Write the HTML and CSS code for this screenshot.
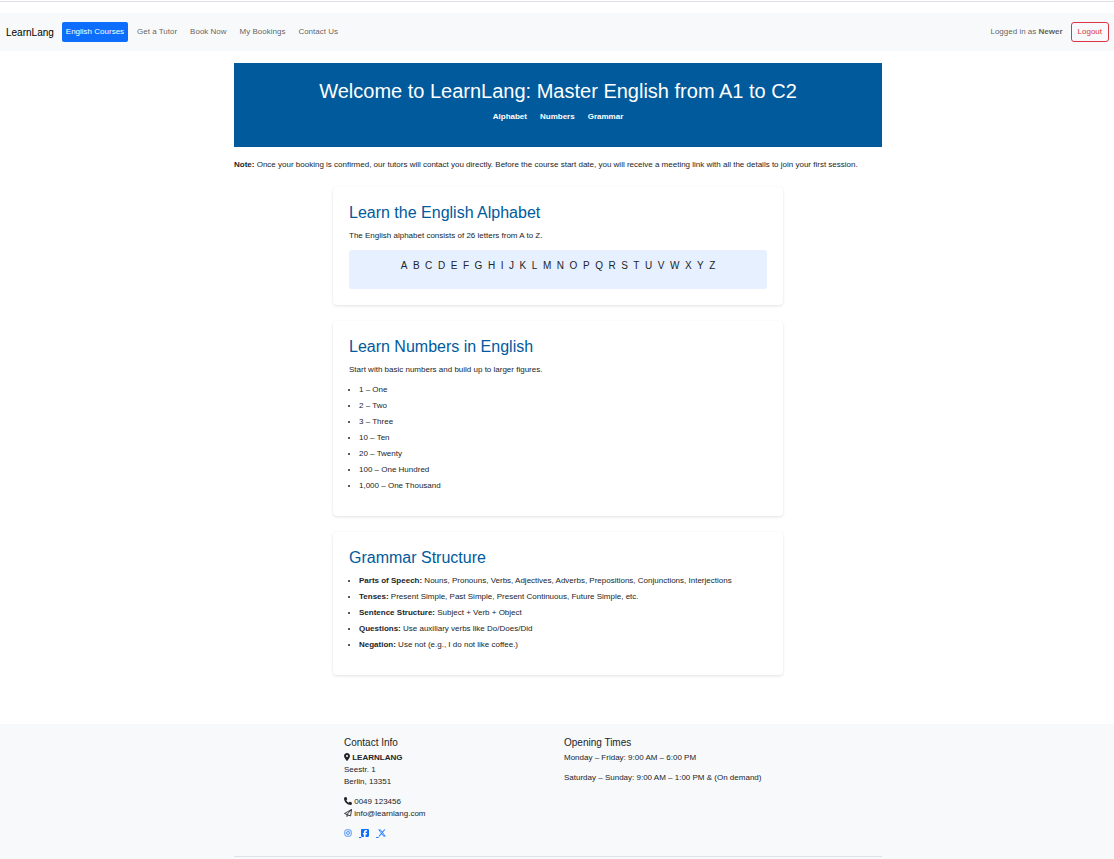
FILE: index.html
```html
<!DOCTYPE html>
<html lang="en">
<head>
<meta charset="utf-8">
<meta name="viewport" content="width=device-width, initial-scale=1">
<title>LearnLang – English Courses</title>
<link rel="stylesheet" href="styles.css">
</head>
<body>
<hr class="top-rule">
<nav class="navbar" aria-label="Main">
  <a class="brand" href="#">LearnLang</a>
  <ul class="nav-links">
    <li><a class="nav-link active" href="#" aria-current="page">English Courses</a></li>
    <li><a class="nav-link" href="#">Get a Tutor</a></li>
    <li><a class="nav-link" href="#">Book Now</a></li>
    <li><a class="nav-link" href="#">My Bookings</a></li>
    <li><a class="nav-link" href="#">Contact Us</a></li>
  </ul>
  <div class="session">
    <span class="user">Logged in as <strong>Newer</strong></span>
    <button class="logout" type="button">Logout</button>
  </div>
</nav>

<main class="container">
  <header class="hero">
    <h1>Welcome to LearnLang: Master English from A1 to C2</h1>
    <ul class="hero-links">
      <li><a href="#alphabet">Alphabet</a></li>
      <li><a href="#numbers">Numbers</a></li>
      <li><a href="#grammar">Grammar</a></li>
    </ul>
  </header>
  <p class="note"><strong>Note:</strong> Once your booking is confirmed, our tutors will contact you directly. Before the course start date, you will receive a meeting link with all the details to join your first session.</p>

  <div class="cards">
    <section class="card" id="alphabet">
      <h2>Learn the English Alphabet</h2>
      <p>The English alphabet consists of 26 letters from A to Z.</p>
      <div class="letters">
        <p>A&nbsp; B&nbsp; C&nbsp; D&nbsp; E&nbsp; F&nbsp; G&nbsp; H&nbsp; I&nbsp; J&nbsp; K&nbsp; L&nbsp; M&nbsp; N&nbsp; O&nbsp; P&nbsp; Q&nbsp; R&nbsp; S&nbsp; T&nbsp; U&nbsp; V&nbsp; W&nbsp; X&nbsp; Y&nbsp; Z</p>
      </div>
    </section>
    <section class="card" id="numbers">
      <h2>Learn Numbers in English</h2>
      <p>Start with basic numbers and build up to larger figures.</p>
      <ul class="topics">
        <li>1 – One</li>
        <li>2 – Two</li>
        <li>3 – Three</li>
        <li>10 – Ten</li>
        <li>20 – Twenty</li>
        <li>100 – One Hundred</li>
        <li>1,000 – One Thousand</li>
      </ul>
    </section>
    <section class="card" id="grammar">
      <h2>Grammar Structure</h2>
      <ul class="topics">
        <li><strong>Parts of Speech:</strong> Nouns, Pronouns, Verbs, Adjectives, Adverbs, Prepositions, Conjunctions, Interjections</li>
        <li><strong>Tenses:</strong> Present Simple, Past Simple, Present Continuous, Future Simple, etc.</li>
        <li><strong>Sentence Structure:</strong> Subject + Verb + Object</li>
        <li><strong>Questions:</strong> Use auxiliary verbs like Do/Does/Did</li>
        <li><strong>Negation:</strong> Use not (e.g., I do not like coffee.)</li>
      </ul>
    </section>
  </div>
</main>

<footer class="footer">
  <div class="container">
    <div class="footer-columns">
      <div class="contact">
        <h5>Contact Info</h5>
        <p>
          <svg class="icon icon-pin" viewBox="0 0 384 512" aria-hidden="true"><path d="M215.7 499.2C267 435 384 279.4 384 192C384 86 298 0 192 0S0 86 0 192c0 87.4 117 243 168.3 307.2c12.3 15.3 35.1 15.3 47.4 0zM192 128a64 64 0 1 1 0 128 64 64 0 1 1 0-128z"/></svg>
          <strong>LEARNLANG</strong><br>Seestr. 1<br>Berlin, 13351
        </p>
        <p>
          <svg class="icon" viewBox="0 0 512 512" aria-hidden="true"><path d="M164.9 24.6c-7.7-18.6-28-28.5-47.4-23.2l-88 24C12.1 30.2 0 46 0 64C0 311.4 200.6 512 448 512c18 0 33.8-12.1 38.6-29.5l24-88c5.3-19.4-4.6-39.7-23.2-47.4l-96-40c-16.3-6.8-35.2-2.1-46.3 11.6L304.7 368C234.3 334.7 177.3 277.7 144 207.3L193.3 167c13.7-11.2 18.4-30 11.6-46.3l-40-96z"/></svg>
          0049 123456<br>
          <svg class="icon icon-line icon-plane" viewBox="0 0 512 512" aria-hidden="true"><path d="M30 290 482 30 420 445 190 350ZM190 350 480 32M190 350V482L275 390"/></svg>
          info@learnlang.com
        </p>
        <p class="social">
          <a href="#" aria-label="Instagram"><svg class="icon icon-line" viewBox="0 0 512 512" aria-hidden="true"><rect x="52" y="52" width="408" height="408" rx="110"/><circle cx="256" cy="256" r="94"/><circle class="dot" cx="376" cy="136" r="28"/></svg></a>
          <a href="#" aria-label="Facebook">&nbsp;<svg class="icon" viewBox="0 32 448 448" aria-hidden="true"><path d="M64 32C28.700 32 0 60.700 0 96V416c0 35.300 28.700 64 64 64h98.200V334.200H109.400V256h52.800V222.300c0-87.100 39.400-127.500 125-127.500 16.200 0 44.200 3.200 55.700 6.400V172c-6-.6-16.500-1-29.600-1-42 0-58.200 15.900-58.200 57.200V256h83.600l-14.400 78.200H255V480H384c35.300 0 64-28.700 64-64V96c0-35.300-28.700-64-64-64z"/></svg></a>
          <a href="#" aria-label="X">&nbsp;<svg class="icon" viewBox="16 16 480 480" aria-hidden="true"><path d="M389.200 48h70.600L305.600 224.200 487 464H345L233.700 318.600 106.500 464H35.800L200.700 275.500 26.800 48H172.400L272.900 180.900zM364.400 421.800h39.100L151.100 88h-42z"/></svg></a>
        </p>
      </div>
      <div class="hours">
        <h5>Opening Times</h5>
        <p>Monday – Friday: 9:00 AM – 6:00 PM</p>
        <p>Saturday – Sunday: 9:00 AM – 1:00 PM &amp; (On demand)</p>
      </div>
    </div>
    <hr>
  </div>
</footer>
</body>
</html>
```

FILE: styles.css
```css
*, *::before, *::after { box-sizing: border-box; }

html { height: 100%; }

body {
  margin: 0;
  min-height: 100%;
  display: flex;
  flex-direction: column;
  font-family: "Liberation Sans", Arial, sans-serif;
  font-size: 8px;
  line-height: 12px;
  color: #212529;
  background: #fff;
}

h1, h2, h5, p, ul { margin: 0; font-weight: 400; }
ul { padding: 0; list-style: none; }
a { color: #0d6efd; }
hr { border: 0; border-top: 1px solid #dee2e6; }

.top-rule { width: 100%; margin: 1px 0 11px; }

.navbar {
  display: flex;
  align-items: center;
  padding: 9px 5px 9px 6px;
  background: #f8f9fa;
}
.brand {
  margin-right: 8px;
  padding-top: 2px;
  font-size: 10px;
  color: #000;
  text-decoration: none;
}
.nav-links { display: flex; gap: 5px; flex: 1; }
.nav-link {
  display: block;
  padding: 4px;
  border-radius: 2px;
  color: rgba(0, 0, 0, .65);
  text-decoration: none;
}
.nav-link.active { background: #0d6efd; color: #fff; }
.session { display: flex; align-items: center; gap: 8px; }
.user { color: rgba(0, 0, 0, .65); }
.logout {
  padding: 3px 6px;
  border: 1px solid #dc3545;
  border-radius: 3px;
  background: transparent;
  color: #dc3545;
  font: inherit;
}

.container {
  width: 100%;
  max-width: 660px;
  margin: 0 auto;
  padding: 0 5px 0 7px;
}

.hero {
  margin-top: 12px;
  padding: 16px;
  background: #005a9c;
  color: #fff;
  text-align: center;
}
.hero h1 { font-size: 20px; line-height: 24px; margin-bottom: 8px; }
.hero-links {
  display: flex;
  justify-content: center;
  gap: 13px;
  margin-bottom: 8px;
}
.hero-links a { color: #fff; font-weight: 700; text-decoration: none; }
.note { margin-top: 12px; }

.cards {
  display: flex;
  flex-direction: column;
  gap: 16px;
  max-width: 450px;
  margin: 16px auto 49px;
}
.card {
  padding: 16px;
  border-radius: 4px;
  background: #fff;
  box-shadow: 0 1px 3px rgba(0, 0, 0, .12);
}
.card h2 {
  margin-bottom: 8px;
  font-size: 16px;
  line-height: 19px;
  color: #005a9c;
}
.card p { margin-bottom: 8px; }
.letters {
  padding: 8px;
  border-radius: 3px;
  background: #e6f0ff;
  text-align: center;
}
.letters p { font-size: 10px; line-height: 15px; }
.topics { padding-left: 10px; margin-bottom: 8px; list-style: disc; }
.topics li { margin-bottom: 4px; }

.footer { flex: 1; padding-top: 12px; background: #f8f9fa; }
.footer-columns {
  display: grid;
  grid-template-columns: 220px 1fr;
  margin-left: 110px;
}
.footer h5 { margin-bottom: 2px; font-size: 10px; line-height: 14px; }
.footer p { margin-bottom: 8px; }
.footer hr { margin: 8px 0 0; }
.social { display: flex; gap: 7px; }

.icon {
  width: 8px;
  height: 8px;
  fill: currentColor;
  vertical-align: -1px;
}
.icon-pin { width: 6px; }
.icon-line {
  fill: none;
  stroke: currentColor;
  stroke-width: 46;
  stroke-linejoin: round;
}
.icon-plane { stroke-width: 56; }
.icon-line .dot { fill: currentColor; stroke: none; }
```
